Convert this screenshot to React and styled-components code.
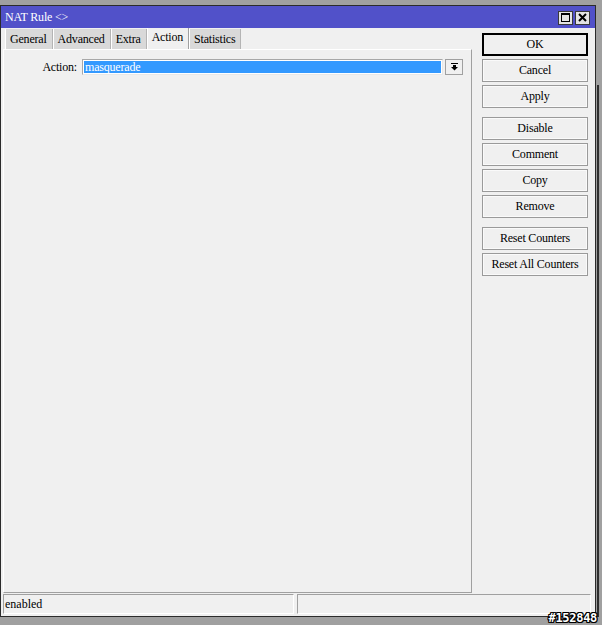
import React from "react";
import styled, { createGlobalStyle } from "styled-components";

const Global = createGlobalStyle`
  html, body { margin: 0; padding: 0; background: #a0a0a0; }
  body { font-family: "Liberation Serif", "Times New Roman", serif; font-size: 12px; color: #000; }
  * { box-sizing: border-box; }
`;

const Desktop = styled.div`
  position: relative;
  width: 602px;
  height: 625px;
  padding-top: 5px;
  overflow: hidden;
`;

const BackEdge = styled.div`
  position: absolute;
  left: 597px;
  top: 85px;
  width: 2px;
  height: 532px;
  background: #2e2e2e;
`;

const Window = styled.div`
  width: 596px;
  height: 612px;
  border: 1px solid #2b2b2b;
  background: #f0f0f0;
  display: flex;
  flex-direction: column;
`;

const TitleBar = styled.div`
  height: 22px;
  background: #5151c9;
  color: #fff;
  display: flex;
  align-items: center;
  justify-content: space-between;
  padding: 0 5px 0 4px;
  font-size: 12px;
  letter-spacing: -0.2px;
`;

const TitleIcons = styled.div`
  display: flex;
  gap: 2px;
  margin-top: 1px;
`;

const TitleBtn = styled.div`
  width: 15px;
  height: 14px;
  background: #e4e4e4;
  border: 1px solid #3a3a3a;
  display: flex;
  align-items: center;
  justify-content: center;
`;

const Main = styled.div`
  flex: 1;
  display: flex;
  padding: 1px 7px 0 2px;
  min-height: 0;
`;

const LeftCol = styled.div`
  width: 469px;
  display: flex;
  flex-direction: column;
`;

const Tabs = styled.div`
  display: flex;
  height: 20px;
  padding-left: 2px;
  align-items: flex-end;
`;

const Tab = styled.div`
  height: ${(p) => (p.$active ? "21px" : "20px")};
  align-self: ${(p) => (p.$active ? "flex-start" : "flex-end")};
  margin-top: ${(p) => (p.$active ? "-1px" : "0")};
  padding: 0 5px ${(p) => (p.$active ? "3px" : "0")} 4px;
  display: flex;
  align-items: center;
  letter-spacing: -0.2px;
  background: ${(p) => (p.$active ? "#f0f0f0" : "#d9d9d9")};
  border-left: 1px solid #fff;
  border-right: 1px solid ${(p) => (p.$active ? "#a0a0a0" : "#b4b4b4")};
  white-space: nowrap;
`;

const Panel = styled.div`
  flex: 1;
  border: 1px solid;
  border-color: #fff #a0a0a0 #a0a0a0 #fff;
  padding: 9px 8px 0 0;
`;

const FieldRow = styled.div`
  display: flex;
  align-items: center;
  height: 16px;
`;

const Label = styled.div`
  width: 73px;
  margin-right: 5px;
  text-align: right;
  letter-spacing: -0.2px;
`;

const Field = styled.div`
  flex: 1;
  height: 16px;
  border: 1px solid;
  border-color: #a8a8a8 #e8e8e8 #e8e8e8 #a8a8a8;
  background: #fff;
  padding: 1px;
  display: flex;
`;

const Selected = styled.div`
  flex: 1;
  background: #3399ff;
  color: #fff;
  padding-left: 1px;
  line-height: 12px;
  font-size: 12px;
  letter-spacing: -0.2px;
`;

const DropBtn = styled.div`
  width: 18px;
  height: 16px;
  margin-left: 2px;
  border: 1px solid #a0a0a0;
  background: #f0f0f0;
  display: flex;
  align-items: center;
  justify-content: center;
`;

const RightCol = styled.div`
  width: 106px;
  margin-left: 10px;
  padding-top: 4px;
  display: flex;
  flex-direction: column;
`;

const Button = styled.div`
  height: 23px;
  margin-top: ${(p) => (p.$group ? "9px" : "3px")};
  &:first-child { margin-top: 0; }
  border: ${(p) => (p.$default ? "2px solid #000" : "1px solid #9a9a9a")};
  box-shadow: ${(p) => (p.$default ? "none" : "inset 0 0 0 1px #fafafa")};
  background: #f0f0f0;
  display: flex;
  align-items: center;
  justify-content: center;
  white-space: nowrap;
  letter-spacing: -0.2px;
`;

const StatusBar = styled.div`
  height: 23px;
  padding: 1px 4px 2px 2px;
  display: flex;
  gap: 3px;
`;

const StatusField = styled.div`
  width: ${(p) => p.$w}px;
  flex: ${(p) => (p.$w ? "none" : "1")};
  height: 20px;
  border: 1px solid;
  border-color: #a0a0a0 #fff #fff #a0a0a0;
  padding-left: 1px;
  display: flex;
  align-items: center;
`;

const Watermark = styled.div`
  position: absolute;
  right: 5px;
  bottom: 0;
  font-family: "DejaVu Sans Mono", monospace;
  font-weight: bold;
  font-size: 12px;
  letter-spacing: -0.3px;
  color: #fff;
  text-shadow: 1px 0 0 #000, -1px 0 0 #000, 0 1px 0 #000, 0 -1px 0 #000,
    1px 1px 0 #000, -1px -1px 0 #000, 1px -1px 0 #000, -1px 1px 0 #000;
`;

const MaxIcon = () => (
  <svg width="9" height="9" viewBox="0 0 9 9">
    <rect x="0.5" y="0.5" width="8" height="8" fill="none" stroke="#000" />
    <rect x="0" y="0" width="9" height="2" fill="#000" />
  </svg>
);

const CloseIcon = () => (
  <svg width="9" height="9" viewBox="0 0 9 9">
    <path d="M1 1 L8 8 M8 1 L1 8" stroke="#000" strokeWidth="2" />
  </svg>
);

const DropIcon = () => (
  <svg width="7" height="8" viewBox="0 0 7 8">
    <rect x="0" y="0" width="7" height="1" fill="#000" />
    <rect x="2" y="2" width="3" height="2" fill="#000" />
    <polygon points="0,4 7,4 3.5,7.5" fill="#000" />
  </svg>
);

export default function App() {
  const tabs = ["General", "Advanced", "Extra", "Action", "Statistics"];
  const buttons = [
    { t: "OK", d: true },
    { t: "Cancel" },
    { t: "Apply" },
    { t: "Disable", g: true },
    { t: "Comment" },
    { t: "Copy" },
    { t: "Remove" },
    { t: "Reset Counters", g: true },
    { t: "Reset All Counters" },
  ];
  return (
    <>
      <Global />
      <Desktop>
        <BackEdge />
        <Window>
          <TitleBar>
            <span>NAT Rule &lt;&gt;</span>
            <TitleIcons>
              <TitleBtn><MaxIcon /></TitleBtn>
              <TitleBtn><CloseIcon /></TitleBtn>
            </TitleIcons>
          </TitleBar>
          <Main>
            <LeftCol>
              <Tabs>
                {tabs.map((t) => (
                  <Tab key={t} $active={t === "Action"}>{t}</Tab>
                ))}
              </Tabs>
              <Panel>
                <FieldRow>
                  <Label>Action:</Label>
                  <Field>
                    <Selected>masquerade</Selected>
                  </Field>
                  <DropBtn><DropIcon /></DropBtn>
                </FieldRow>
              </Panel>
            </LeftCol>
            <RightCol>
              {buttons.map((b) => (
                <Button key={b.t} $default={b.d} $group={b.g}>{b.t}</Button>
              ))}
            </RightCol>
          </Main>
          <StatusBar>
            <StatusField $w={291}>enabled</StatusField>
            <StatusField />
          </StatusBar>
        </Window>
        <Watermark>#152848</Watermark>
      </Desktop>
    </>
  );
}
